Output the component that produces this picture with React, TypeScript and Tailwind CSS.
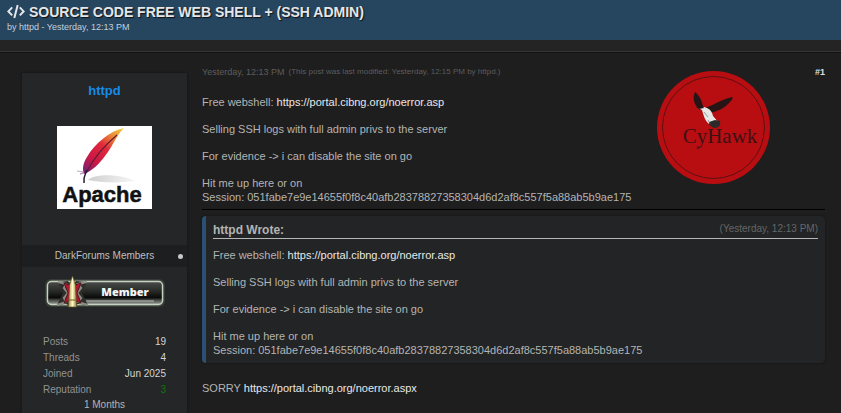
import React from "react";

const stats = [
  { label: "Posts", value: "19", tone: "text-[#d4d4d4]" },
  { label: "Threads", value: "4", tone: "text-[#d4d4d4]" },
  { label: "Joined", value: "Jun 2025", tone: "text-[#d4d4d4]" },
  { label: "Reputation", value: "3", tone: "text-[#087a08]" },
];

function CodeIcon() {
  return (
    <svg className="h-4 w-[18px] shrink-0" viewBox="0 0 18 16" fill="none" stroke="#e4e7ea" strokeWidth="2" aria-hidden="true">
      <path d="M5.200 3.400 1.400 7.400l3.800 4M12.800 3.400l3.800 4-3.800 4M10.700 1 7.300 14" />
    </svg>
  );
}

function ApacheAvatar() {
  return (
    <svg className="h-[83px] w-[95px]" viewBox="0 0 95 83" role="img" aria-label="Apache">
      <defs>
        <linearGradient id="feather" x1="66" y1="2" x2="28" y2="47" gradientUnits="userSpaceOnUse">
          <stop offset="0" stopColor="#f2cf3b" />
          <stop offset=".22" stopColor="#ea8b37" />
          <stop offset=".45" stopColor="#e0283c" />
          <stop offset=".75" stopColor="#cb1746" />
          <stop offset="1" stopColor="#6d2378" />
        </linearGradient>
        <linearGradient id="ground" x1="0" x2="1">
          <stop offset="0" stopColor="#cfcfcf" />
          <stop offset="1" stopColor="#f6f6f6" />
        </linearGradient>
      </defs>
      <rect width="95" height="83" fill="#fff" />
      <path d="M31 54c6-7 34-6 47 1-14 2-34 2-47-1Z" fill="url(#ground)" />
      <path d="M67 2C53 5 38 17 30 31c-4 6-5 12-3 17 8-3 15-10 21-18C56 20 59 10 67 2Z" fill="url(#feather)" />
      <path d="M60 9C48 19 36 33 29 47" fill="none" stroke="#641b33" strokeWidth="1.100" />
      <path d="M30 44c-2 5-4 7-3 13" fill="none" stroke="#2b1a2b" strokeWidth="1.500" />
      <path d="m20 45 7 1-4 2 5-1" fill="none" stroke="#9a6c9f" strokeWidth=".6" />
      <text x="45" y="76" textAnchor="middle" fontFamily="Liberation Sans, sans-serif" fontWeight="700" fontSize="22" fill="#111" stroke="#111" strokeWidth=".5">Apache</text>
    </svg>
  );
}

function MemberBadge() {
  return (
    <svg className="h-9 w-[124px]" viewBox="0 0 124 36" role="img" aria-label="Member">
      <defs>
        <linearGradient id="plate" x1="0" y1="0" x2="0" y2="1">
          <stop offset="0" stopColor="#4a4d4b" />
          <stop offset=".45" stopColor="#252725" />
          <stop offset=".7" stopColor="#090a09" />
          <stop offset=".82" stopColor="#4c504b" />
          <stop offset="1" stopColor="#999e96" />
        </linearGradient>
        <linearGradient id="blade" x1="0" x2="1">
          <stop offset="0" stopColor="#a79250" />
          <stop offset=".5" stopColor="#fffbc7" />
          <stop offset="1" stopColor="#9a843d" />
        </linearGradient>
      </defs>
      <rect x="2" y="4" width="120" height="28" rx="6" fill="#53614f" opacity=".35" />
      <rect x="3" y="5" width="118" height="26" rx="5" fill="#53614f" opacity=".5" />
      <rect x="4.500" y="6.500" width="115" height="23" rx="4" fill="url(#plate)" stroke="#c8d2c2" strokeWidth="1.400" />
      <path d="M43 26h68" stroke="#dbddd8" strokeWidth="1" opacity=".75" />
      <path d="m15 7 10-1 4 5 4-5 11 1-5 11 6 12-10-1-6 3-6-3-9 1 6-12Z" fill="#302e2b" />
      <path d="m15 7 8 2-2 4 4 5-4 5 2 4-9 3M44 7l-9 2 3 4-4 5 4 5-3 4 10 3" fill="none" stroke="#8d8a84" strokeWidth="2.200" />
      <path d="m21 8 6 2v16l-6 2 4-10Zm17 0-6 2v16l6 2-4-10Z" fill="#b31730" stroke="#3b1116" strokeWidth=".8" />
      <path d="m29.500 1 3 9 1 22h-8l1-22Z" fill="url(#blade)" stroke="#605326" strokeWidth=".7" />
      <path d="M26 25h7" stroke="#6d5e25" strokeWidth="1" />
      <text x="82" y="21" textAnchor="middle" fontFamily="Open Sans, sans-serif" fontWeight="800" fontSize="11" fill="#f5f5f5">Member</text>
    </svg>
  );
}

function HawkSeal() {
  return (
    <svg className="size-[113px] shrink-0" viewBox="0 0 113 113" role="img" aria-label="CyHawk">
      <circle cx="56.500" cy="56.500" r="56.500" fill="#b80e12" />
      <circle cx="56.500" cy="56.500" r="51" fill="none" stroke="#5b1012" strokeWidth="1" />
      <path d="M38 21c5 4 7 9 8 15l-3 3c-6-5-8-11-5-18Z" fill="#271516" />
      <path d="M46 37c8-1 14-7 29-11 2 1-1 4-4 7-5 5-10 7-18 9Z" fill="#271516" />
      <path d="m41 37 6-1c5 1 8 4 9 9l6 7-5 3c-8-1-10-9-12-16Z" fill="#e7e7e5" />
      <path d="m39 36 6-2 2 3-5 1Z" fill="#241617" />
      <path d="m52 51 6-2 5 1c1 4-1 7-6 7l-5-3Z" fill="#2b2929" />
      <path d="m51 49 2 4M47 41l4 5" stroke="#777" strokeWidth=".7" />
      <text x="63" y="72" textAnchor="middle" fontFamily="Liberation Serif, serif" fontSize="21" fill="#3c1114">CyHawk</text>
      <path d="m39 77 3 1" stroke="#771214" />
    </svg>
  );
}

function PostLink({ href }: { href: string }) {
  return <a className="text-[#e8e8e8]" href={href}>{href}</a>;
}

function Message() {
  return (
    <div className="flex flex-col gap-[13px]">
      <p>Free webshell: <PostLink href="https://portal.cibng.org/noerror.asp" /></p>
      <p>Selling SSH logs with full admin privs to the server</p>
      <p>For evidence -&gt; i can disable the site on go</p>
      <p>
        Hit me up here or on<br />
        Session: 051fabe7e9e14655f0f8c40afb28378827358304d6d2af8c557f5a88ab5b9ae175
      </p>
    </div>
  );
}

function AuthorPanel() {
  return (
    <aside className="mt-5 w-[165px] shrink-0 bg-[#242628] text-[10px] shadow-[0_0_2px_#111]">
      <div className="flex h-[172px] flex-col items-center pt-2.5">
        <a href="#httpd" className="text-[13px] leading-4 font-bold text-[#178be6]">httpd</a>
        <div className="mt-[27px]"><ApacheAvatar /></div>
      </div>
      <div className="relative flex h-[22px] items-center justify-center bg-[#1c1e20] text-[#bfbfbf]">
        DarkForums Members
        <span className="absolute right-1 size-[5px] rounded-full bg-[#c9c9c9]" />
      </div>
      <div className="flex h-[67px] justify-center pt-2"><MemberBadge /></div>
      <dl className="px-[21px] leading-4">
        {stats.map((s) => (
          <div key={s.label} className="flex justify-between">
            <dt className="text-[#929292]">{s.label}</dt>
            <dd className={s.tone}>{s.value}</dd>
          </div>
        ))}
      </dl>
      <p className="pb-1 text-center leading-3.5 text-[#b5b5b5]">1 Months</p>
    </aside>
  );
}

export default function App() {
  return (
    <div className="min-h-screen bg-[#1e1e1e] font-['Liberation_Sans',Arial,sans-serif] text-[11px] leading-[14px] text-[#b4b4b4]">
      <header className="h-10 bg-[#26455f] px-[7px] pt-1">
        <h1 className="flex items-center gap-1 text-[14px] leading-4 font-bold text-[#e4e7ea] [text-shadow:1px_1px_1px_#111]">
          <CodeIcon />
          SOURCE CODE FREE WEB SHELL + (SSH ADMIN)
        </h1>
        <p className="text-[9px] leading-3.5 text-[#c3d0db]">by httpd - Yesterday, 12:13 PM</p>
      </header>
      <div className="h-3 border-b border-[#343434] bg-[#242424]" />
      <article className="flex gap-[15px] border-t border-[#131313] pr-4 pl-[22px]">
        <AuthorPanel />
        <section className="min-w-0 flex-1 pt-3">
          <div className="flex items-start">
            <div className="min-w-0 flex-1">
              <p className="mb-4 flex gap-1 text-[8px] text-[#5d5d5d]">
                <time className="text-[9px]">Yesterday, 12:13 PM</time>
                <span>(This post was last modified: Yesterday, 12:15 PM by httpd.)</span>
              </p>
              <Message />
            </div>
            <div className="pt-1.5"><HawkSeal /></div>
            <a href="#1" className="w-[55px] text-right text-[9px] font-bold text-[#dedede]">#1</a>
          </div>
          <hr className="mt-[5px] border-black" />
          <blockquote className="mt-1.5 rounded-[4px] border-l-4 border-[#2a5175] bg-[#222425] px-[7px] pt-[7px] pb-1.5 shadow-[0_0_2px_#111]">
            <div className="mb-[9px] flex h-4 justify-between border-b border-[#b7b7b7]">
              <cite className="text-[12px] font-bold not-italic">httpd Wrote:</cite>
              <span className="text-[10px] leading-3 text-[#666]">(Yesterday, 12:13 PM)</span>
            </div>
            <Message />
          </blockquote>
          <p className="mt-[18px]">SORRY <PostLink href="https://portal.cibng.org/noerror.aspx" /></p>
        </section>
      </article>
    </div>
  );
}
